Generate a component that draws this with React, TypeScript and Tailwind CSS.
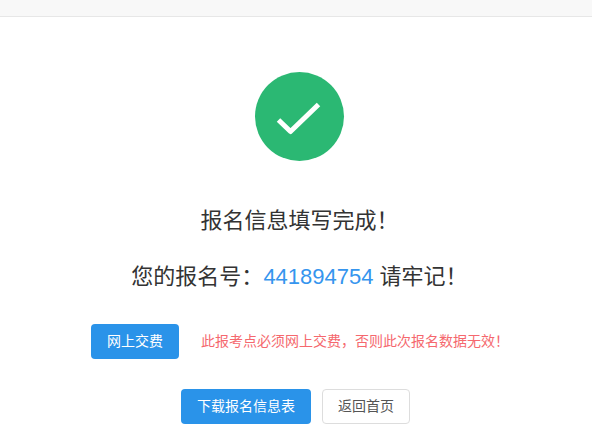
export default function App() {
  return (
    <div className="w-[592px] h-[444px] overflow-hidden bg-white flex flex-col font-['Liberation_Sans','Noto_Sans_CJK_SC',sans-serif] text-[#333333]">
      <div className="w-full h-[17px] shrink-0 bg-[#f8f8f8] border-b border-[#e7e7e7]" />
      <div className="w-full pl-[7px] flex flex-col items-center">
        <div className="mt-[55px] w-[89px] h-[89px] rounded-full bg-[#2bb873] shrink-0">
          <svg width="89" height="89" viewBox="0 0 89 89" fill="none">
            <path d="M23.5 48L35.5 59.5L63.5 32.5" stroke="#ffffff" strokeWidth="5" strokeLinecap="butt" strokeLinejoin="round" />
          </svg>
        </div>
        <div className="mt-[45px] h-[30px] leading-[30px] text-[22px] text-center whitespace-nowrap">报名信息填写完成！</div>
        <div className="mt-[26px] h-[30px] leading-[30px] text-[22px] text-center whitespace-nowrap">
          您的报名号：<span className="text-[#3595ee]">441894754</span> 请牢记！
        </div>
      </div>
      <div className="mt-[32px] w-full pl-[91px] flex items-center">
        <button className="w-[88px] h-[35px] rounded bg-[#2a93e9] text-white text-[14px]">网上交费</button>
        <span className="ml-[22px] text-[14px] text-[#f5686e] whitespace-nowrap">此报考点必须网上交费，否则此次报名数据无效！</span>
      </div>
      <div className="mt-[30px] w-full pl-[181px] flex items-center gap-[11px]">
        <button className="w-[130px] h-[35px] rounded bg-[#2a93e9] text-white text-[14px]">下载报名信息表</button>
        <button className="w-[88px] h-[35px] rounded bg-white border border-[#dddddd] text-[#555555] text-[14px]">返回首页</button>
      </div>
    </div>
  );
}
